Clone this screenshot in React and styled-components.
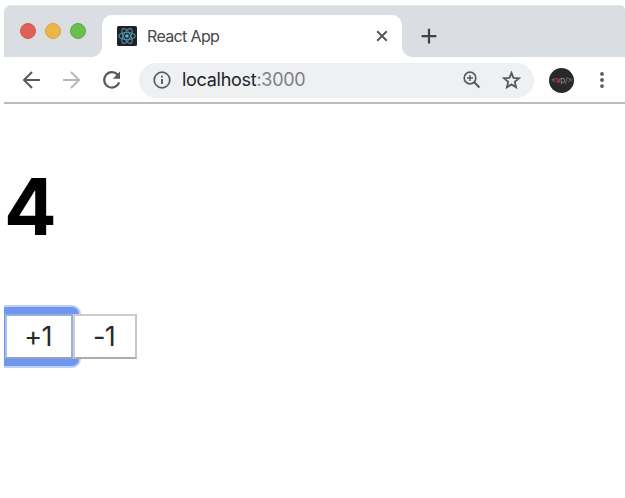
import React, { useState } from "react";
import styled, { createGlobalStyle } from "styled-components";

const GlobalStyle = createGlobalStyle`
  * { box-sizing: border-box; }
  body { margin: 0; background: #fff; overflow: hidden; font-family: Inter, "Liberation Sans", sans-serif; }
`;

const BrowserWindow = styled.main`
  height: 498px;
  padding: 5px 0 0 4px;
  overflow: hidden;
`;

const TabStrip = styled.header`
  display: flex;
  height: 52px;
  padding: 9px 0 0 16px;
  background: #dadde2;
  border-top: 1px solid #e4e6ea;
  border-radius: 7px 5px 0 0;
`;

const WindowControls = styled.div`
  display: flex;
  gap: 9px;
  width: 82px;
  padding-top: 8px;
`;

const Light = styled.span`
  width: 16px;
  height: 16px;
  border-radius: 50%;
  background: ${(p) => p.$fill};
  border: 1px solid ${(p) => p.$edge};
`;

const Tab = styled.div`
  position: relative;
  display: flex;
  align-items: center;
  width: 300px;
  height: 42px;
  padding: 0 14px 0 15px;
  background: #fff;
  border-radius: 10px 10px 0 0;
  &::before, &::after {
    content: "";
    position: absolute;
    bottom: 0;
    width: 10px;
    height: 10px;
  }
  &::before { left: -10px; background: radial-gradient(circle at 0 0, transparent 9.5px, #fff 10px); }
  &::after { right: -10px; background: radial-gradient(circle at 100% 0, transparent 9.5px, #fff 10px); }
`;

const TabTitle = styled.span`
  flex: 1;
  margin-left: 10px;
  font-size: 16px;
  line-height: 20px;
  font-weight: 400;
  letter-spacing: -0.65px;
  color: #45484c;
`;

const NewTab = styled.div`
  display: flex;
  margin: 12px 0 0 18px;
`;

const Toolbar = styled.nav`
  display: flex;
  align-items: center;
  height: 47px;
  padding: 1px 14px 0 18px;
  border-bottom: 2px solid #bcbcbc;
`;

const NavIcons = styled.div`
  display: flex;
  gap: 20px;
  width: 117px;
`;

const AddressBar = styled.div`
  display: flex;
  align-items: center;
  width: 395px;
  height: 35px;
  padding: 0 13px 0 14px;
  border-radius: 18px;
  background: #eff0f2;
`;

const Address = styled.span`
  flex: 1;
  margin-left: 11px;
  font-size: 18px;
  line-height: 24px;
  letter-spacing: -0.28px;
  color: #7c7f83;
`;

const Host = styled.span`
  color: #222427;
`;

const AddressActions = styled.div`
  display: flex;
  gap: 21px;
`;

const Avatar = styled.div`
  display: flex;
  align-items: center;
  justify-content: center;
  flex: none;
  width: 25px;
  height: 25px;
  margin-left: 15px;
  border-radius: 50%;
  background: #292929;
  color: #8d8d8d;
  font-size: 8px;
  line-height: 10px;
  letter-spacing: -0.4px;
`;

const AvatarAccent = styled.span`
  color: #c92d5c;
  font-weight: 700;
`;

const MenuIcon = styled.div`
  display: flex;
  margin-left: 19px;
`;

const Page = styled.section`
  height: 394px;
  overflow: hidden;
`;

const Count = styled.h1`
  margin: 55px 0 0;
  font-size: 78px;
  line-height: 96px;
  font-weight: 700;
  color: #000;
`;

const Buttons = styled.div`
  display: flex;
  margin: 59px 0 0 1px;
  isolation: isolate;
`;

const CounterButton = styled.button`
  position: relative;
  width: ${(p) => p.$width}px;
  height: 45px;
  padding: 0 2px 0 0;
  border: 2px solid;
  border-color: ${(p) => (p.$focused ? "#95ade6 #9dafd9 #8ba0d0 #a9bdec" : "#cdcdcd #c6c6c6 #adadad #cdcdcd")};
  background: #fff;
  color: #292929;
  font: 400 27px/38px Inter, sans-serif;
  letter-spacing: -0.7px;
  outline: none;
  border-radius: 0;
  &::before {
    content: "";
    display: ${(p) => (p.$focused ? "block" : "none")};
    position: absolute;
    inset: -11px -10px;
    z-index: -1;
    border-radius: 9px;
    border: 2px solid #bdd0fa;
    background: #7096ee;
  }
`;

const strokeProps = { fill: "none", stroke: "#56595d", strokeWidth: 2 };

function ReactLogo() {
  return (
    <svg width="20" height="20" viewBox="0 0 20 20">
      <rect width="20" height="20" rx="1.5" fill="#202224" />
      <g fill="none" stroke="#5190aa" strokeWidth="1.1">
        {[0, 60, 120].map((angle) => (
          <ellipse key={angle} cx="10" cy="10" rx="8.3" ry="3.5" transform={`rotate(${angle} 10 10)`} />
        ))}
      </g>
      <circle cx="10" cy="10" r="1.8" fill="#65b5d0" />
    </svg>
  );
}

function ArrowIcon({ forward }) {
  return (
    <svg width="20" height="20" viewBox="0 0 20 20" {...strokeProps} stroke={forward ? "#b5b6b8" : "#56595d"}>
      <path d={forward ? "M1 10H16.5M9 2l8 8-8 8" : "M18 10H2.5M10 2l-8 8 8 8"} />
    </svg>
  );
}

function ReloadIcon() {
  return (
    <svg width="20" height="20" viewBox="0 0 20 20" {...strokeProps} strokeWidth="2.2">
      <path d="M17.2 12.4A7.7 7.7 0 1 1 15.7 4.8" />
      <path d="M18 1.6v7.2h-7.2z" fill="#56595d" stroke="none" />
    </svg>
  );
}

function InfoIcon() {
  return (
    <svg width="18" height="18" viewBox="0 0 18 18" {...strokeProps} strokeWidth="1.7">
      <circle cx="9" cy="9" r="7.8" />
      <path d="M9 8v5M9 4.7v1.9" strokeWidth="1.9" />
    </svg>
  );
}

function ZoomIcon() {
  return (
    <svg width="18" height="18" viewBox="0 0 18 18" {...strokeProps} strokeWidth="1.7">
      <circle cx="7" cy="7" r="5.8" />
      <path d="M11.2 11.2l5.3 5.3" strokeWidth="2.1" />
      <path d="M4 7h6M7 4v6" strokeWidth="1.4" />
    </svg>
  );
}

function StarIcon() {
  return (
    <svg width="19" height="18" viewBox="0 0 19 18" {...strokeProps} strokeWidth="1.8">
      <path d="M9.5 1.8l2 5 5.5.5-4.2 3.6 1.3 5.4-4.6-2.9-4.6 2.9 1.3-5.4L2 7.3l5.5-.5z" />
    </svg>
  );
}

export default function App() {
  const [count, setCount] = useState(4);
  return (
    <BrowserWindow>
      <GlobalStyle />
      <TabStrip>
        <WindowControls>
          <Light $fill="#df6156" $edge="#cf564c" />
          <Light $fill="#ebb548" $edge="#d9a540" />
          <Light $fill="#68c14b" $edge="#58ad3d" />
        </WindowControls>
        <Tab>
          <ReactLogo />
          <TabTitle>React App</TabTitle>
          <svg width="12" height="12" viewBox="0 0 12 12" {...strokeProps}>
            <path d="M1.2 1.2l9.6 9.6M10.8 1.2L1.2 10.8" />
          </svg>
        </Tab>
        <NewTab>
          <svg width="18" height="18" viewBox="0 0 18 18" {...strokeProps} stroke="#3e4145" strokeWidth="2.2">
            <path d="M9 1.8v14.8M1.6 9.2h14.8" />
          </svg>
        </NewTab>
      </TabStrip>
      <Toolbar>
        <NavIcons>
          <ArrowIcon />
          <ArrowIcon forward />
          <ReloadIcon />
        </NavIcons>
        <AddressBar>
          <InfoIcon />
          <Address><Host>localhost</Host>:3000</Address>
          <AddressActions>
            <ZoomIcon />
            <StarIcon />
          </AddressActions>
        </AddressBar>
        <Avatar><span>&lt;<AvatarAccent>v</AvatarAccent>p/&gt;</span></Avatar>
        <MenuIcon>
          <svg width="18" height="18" viewBox="0 0 18 18" fill="#56595d">
            <circle cx="9" cy="2.9" r="1.9" />
            <circle cx="9" cy="9" r="1.9" />
            <circle cx="9" cy="15.1" r="1.9" />
          </svg>
        </MenuIcon>
      </Toolbar>
      <Page>
        <Count>{count}</Count>
        <Buttons>
          <CounterButton $width={68} $focused onClick={() => setCount(count + 1)}>+1</CounterButton>
          <CounterButton $width={64} onClick={() => setCount(count - 1)}>-1</CounterButton>
        </Buttons>
      </Page>
    </BrowserWindow>
  );
}
